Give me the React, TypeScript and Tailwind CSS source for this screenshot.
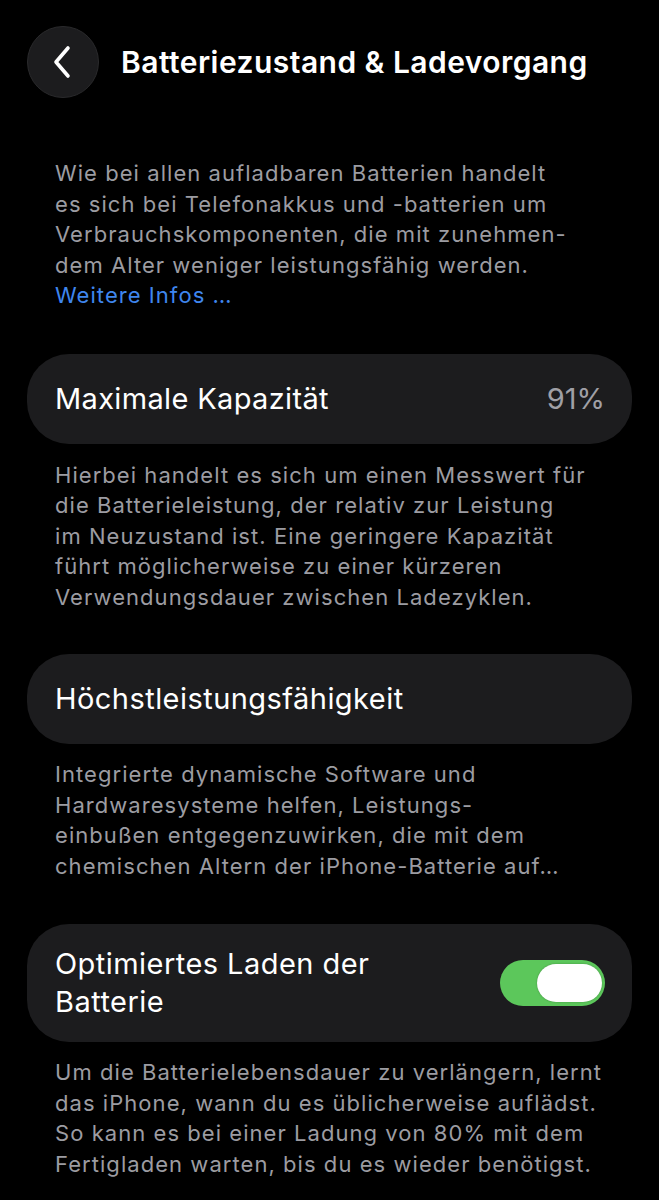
import React from "react";

const font = { fontFamily: "Inter, 'Noto Sans', sans-serif" };

function Card({ children }: { children: React.ReactNode }) {
  return (
    <div className="mx-[27px] flex min-h-[90px] items-center justify-between rounded-[42px] bg-[#1c1c1e] py-[21px] pl-[28px] pr-[27px]">
      {children}
    </div>
  );
}

function Note({ children }: { children: React.ReactNode }) {
  return (
    <p className="whitespace-nowrap pl-[55px] pr-[10px] text-[22px] leading-[30.5px] tracking-[1.05px] text-[#9c9ca2]">
      {children}
    </p>
  );
}

export default function App() {
  return (
    <div className="min-h-[1200px] w-[659px] bg-black text-white" style={font}>
      <header className="flex items-center pt-[26px]">
        <button className="ml-[27px] flex h-[72px] w-[72px] items-center justify-center rounded-full border border-[#2a2a2c] bg-[#1c1c1e]">
          <svg width="26" height="34" viewBox="0 0 26 34" fill="none">
            <path d="M18 3 L6 17 L18 31" stroke="white" strokeWidth="3.6" strokeLinecap="round" strokeLinejoin="round" />
          </svg>
        </button>
        <h1 className="ml-[22px] text-[30px] font-semibold tracking-[0.45px]">Batteriezustand &amp; Ladevorgang</h1>
      </header>

      <div className="mt-[60px]">
        <Note>
          Wie bei allen aufladbaren Batterien handelt
          <br />
          es sich bei Telefonakkus und -batterien um
          <br />
          Verbrauchskomponenten, die mit zunehmen-
          <br />
          dem Alter weniger leistungsfähig werden.
          <br />
          <span className="text-[#3f86ee]">Weitere Infos …</span>
        </Note>
      </div>

      <div className="mt-[43px]">
        <Card>
          <span className="text-[29px] leading-[38px] tracking-[0.35px]">Maximale Kapazität</span>
          <span className="text-[29px] leading-[38px] text-[#a0a0a6]">91%</span>
        </Card>
      </div>

      <div className="mt-[16px]">
        <Note>
          Hierbei handelt es sich um einen Messwert für
          <br />
          die Batterieleistung, der relativ zur Leistung
          <br />
          im Neuzustand ist. Eine geringere Kapazität
          <br />
          führt möglicherweise zu einer kürzeren
          <br />
          Verwendungsdauer zwischen Ladezyklen.
        </Note>
      </div>

      <div className="mt-[42px]">
        <Card>
          <span className="text-[29px] leading-[38px] tracking-[0.45px]">Höchstleistungsfähigkeit</span>
        </Card>
      </div>

      <div className="mt-[15px]">
        <Note>
          Integrierte dynamische Software und
          <br />
          Hardwaresysteme helfen, Leistungs-
          <br />
          einbußen entgegenzuwirken, die mit dem
          <br />
          chemischen Altern der iPhone-Batterie auf…
        </Note>
      </div>

      <div className="mt-[43px]">
        <Card>
          <span className="text-[29px] leading-[38px] tracking-[0.45px]">
            Optimiertes Laden der
            <br />
            Batterie
          </span>
          <div className="flex h-[46px] w-[105px] items-center rounded-full bg-[#5cc75b] pl-[37px]">
            <div className="h-[38px] w-[65px] rounded-full bg-white shadow-[0_0_2px_rgba(0,0,0,0.3)]" />
          </div>
        </Card>
      </div>

      <div className="mt-[15px]">
        <Note>
          Um die Batterielebensdauer zu verlängern, lernt
          <br />
          das iPhone, wann du es üblicherweise auflädst.
          <br />
          So kann es bei einer Ladung von 80% mit dem
          <br />
          Fertigladen warten, bis du es wieder benötigst.
        </Note>
      </div>
    </div>
  );
}
